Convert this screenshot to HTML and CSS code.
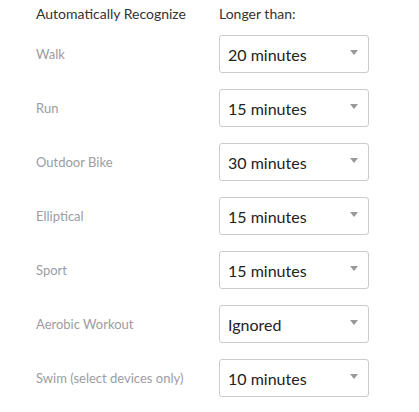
FILE: index.html
```html
<!DOCTYPE html>
<html>
<head>
<meta charset="utf-8">
<link rel="stylesheet" href="styles.css">
</head>
<body>
<div class="panel">
  <div class="head">
    <div class="head-label">Automatically Recognize</div>
    <div class="head-label">Longer than:</div>
  </div>
  <div class="row"><div class="label">Walk</div><div class="select"><span>20 minutes</span><i class="caret"></i></div></div>
  <div class="row"><div class="label">Run</div><div class="select"><span>15 minutes</span><i class="caret"></i></div></div>
  <div class="row"><div class="label">Outdoor Bike</div><div class="select"><span>30 minutes</span><i class="caret"></i></div></div>
  <div class="row"><div class="label">Elliptical</div><div class="select"><span>15 minutes</span><i class="caret"></i></div></div>
  <div class="row"><div class="label">Sport</div><div class="select"><span>15 minutes</span><i class="caret"></i></div></div>
  <div class="row"><div class="label">Aerobic Workout</div><div class="select"><span>Ignored</span><i class="caret"></i></div></div>
  <div class="row"><div class="label">Swim (select devices only)</div><div class="select"><span>10 minutes</span><i class="caret"></i></div></div>
</div>
</body>
</html>
```
FILE: styles.css
```css
html, body {
  margin: 0;
  padding: 0;
  background: #fff;
}
.panel {
  padding: 4px 0 0 36px;
  font-family: "Lato", "Open Sans", sans-serif;
}
.head {
  display: grid;
  grid-template-columns: 183px 150px;
  height: 31px;
  align-items: start;
}
.head-label {
  font-size: 14px;
  color: #333;
  line-height: 20px;
}
.row {
  display: grid;
  grid-template-columns: 183px 150px;
  align-items: center;
  margin-bottom: 16px;
}
.label {
  font-size: 13px;
  color: #9c9ca2;
}
.select {
  height: 38px;
  box-sizing: border-box;
  border: 1px solid #ccc;
  border-radius: 3px;
  display: flex;
  align-items: center;
  justify-content: space-between;
  padding: 0 10px 0 8px;
  font-size: 16px;
  color: #222;
}
.caret {
  width: 0;
  height: 0;
  border-left: 4px solid transparent;
  border-right: 4px solid transparent;
  border-top: 5px solid #999;
  margin-top: -4px;
}
```
